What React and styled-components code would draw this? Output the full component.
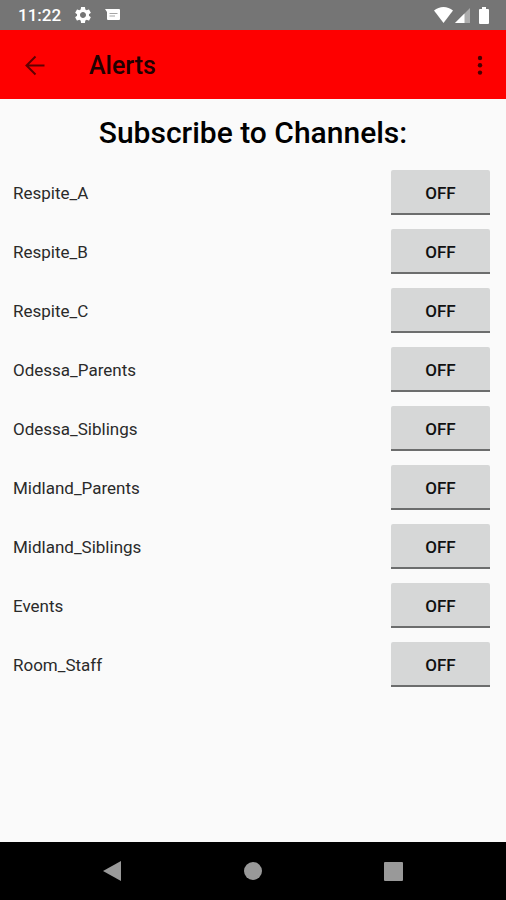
import React, { useState } from "react";
import styled, { createGlobalStyle } from "styled-components";

const Global = createGlobalStyle`
  *, *::before, *::after { box-sizing: border-box; }
  body { margin: 0; font-family: Roboto, "Noto Sans", sans-serif; background: #fafafa; color: #2a2a2a; }
  button { font: inherit; color: inherit; border: 0; padding: 0; background: none; cursor: pointer; }
`;

const Screen = styled.div`
  min-height: 100vh;
  display: flex;
  flex-direction: column;
`;

const StatusBar = styled.div`
  height: 30px;
  padding: 0 17px 0 18px;
  display: flex;
  align-items: center;
  justify-content: space-between;
  background: #757575;
  color: #fff;
`;

const StatusGroup = styled.div`
  display: flex;
  align-items: center;
  gap: 12px;
`;

const SystemIcons = styled(StatusGroup)`
  gap: 2px;

  svg:last-child { margin-left: 7px; }
`;

const Clock = styled.span`
  font-size: 17px;
  font-weight: 500;
  line-height: 32px;
`;

const AppBar = styled.header`
  height: 69px;
  padding: 2px 12px 0 21px;
  display: flex;
  align-items: center;
  background: #fe0000;
`;

const BarButton = styled.button`
  display: flex;
  align-items: center;
  justify-content: center;
  width: 28px;
  height: 44px;
`;

const BarTitle = styled.h1`
  flex: 1;
  margin: 0 0 0 40px;
  font-size: 25px;
  font-weight: 500;
  color: #200000;
`;

const Content = styled.main`
  flex: 1;
  padding: 15px 13px;
`;

const Heading = styled.h2`
  margin: 0 0 18px;
  font-size: 30px;
  line-height: 38px;
  font-weight: 500;
  text-align: center;
  color: #000;
`;

const ChannelList = styled.ul`
  margin: 0;
  padding: 0 3px 0 0;
  list-style: none;
  display: flex;
  flex-direction: column;
  gap: 14px;
`;

const Channel = styled.li`
  display: flex;
  align-items: center;
  justify-content: space-between;
  font-size: 17px;
`;

const Toggle = styled.button`
  && {
    width: 99px;
    height: 45px;
    padding-top: 2px;
    border-radius: 2px 2px 0 0;
    box-shadow: inset 0 -2px ${({ $on }) => ($on ? "#d81b60" : "#6c6d6d")};
    background: #d6d7d7;
    color: #111;
    font-size: 17px;
    font-weight: 500;
    line-height: 43px;
  }
`;

const NavBar = styled.nav`
  height: 58px;
  padding: 0 42px;
  display: flex;
  align-items: center;
  justify-content: space-around;
  background: #000;
`;

const NavButton = styled.button`
  && {
    width: 48px;
    height: 48px;
    display: flex;
    align-items: center;
    justify-content: center;
    color: #999;
  }
`;

const channels = [
  "Respite_A", "Respite_B", "Respite_C", "Odessa_Parents", "Odessa_Siblings",
  "Midland_Parents", "Midland_Siblings", "Events", "Room_Staff",
];

function ChannelRow({ name }) {
  const [on, setOn] = useState(false);
  const id = `channel-${name}`;
  return (
    <Channel>
      <label htmlFor={id}>{name}</label>
      <Toggle id={id} type="button" $on={on} aria-pressed={on} onClick={() => setOn(!on)}>
        {on ? "ON" : "OFF"}
      </Toggle>
    </Channel>
  );
}

const GearIcon = () => (
  <svg width="20" height="20" viewBox="0 0 24 24" fill="currentColor" aria-hidden="true">
    <path d="M19.14 12.94c.04-.3.06-.61.06-.94 0-.32-.02-.64-.07-.94l2.03-1.58c.18-.14.23-.41.12-.61l-1.92-3.32c-.12-.22-.37-.29-.59-.22l-2.39.96c-.5-.38-1.03-.7-1.62-.94l-.36-2.54c-.04-.24-.24-.41-.48-.41h-3.84c-.24 0-.43.17-.47.41l-.36 2.54c-.59.24-1.13.57-1.62.94l-2.39-.96c-.22-.08-.47 0-.59.22L2.74 8.87c-.12.21-.08.47.12.61l2.03 1.58c-.05.3-.09.63-.09.94s.02.64.07.94l-2.03 1.58c-.18.14-.23.41-.12.61l1.92 3.32c.12.22.37.29.59.22l2.39-.96c.5.38 1.03.7 1.62.94l.36 2.54c.05.24.24.41.48.41h3.84c.24 0 .44-.17.47-.41l.36-2.54c.59-.24 1.13-.56 1.62-.94l2.39.96c.22.08.47 0 .59-.22l1.92-3.32c.12-.22.07-.47-.12-.61l-2.01-1.58zM12 15.6c-1.98 0-3.6-1.62-3.6-3.6s1.62-3.6 3.6-3.6 3.6 1.62 3.6 3.6-1.62 3.6-3.6 3.6z" />
  </svg>
);

const MessageIcon = () => (
  <svg width="15" height="12" viewBox="0 0 15 12" aria-hidden="true">
    <path d="M0 0H14Q15 0 15 1V10Q15 11 14 11H3Q2 11 2 10V3Z" fill="currentColor" />
    <path d="M4.500 4.500H12.500M4.500 7H10" stroke="#a5a5a5" strokeWidth="1" />
  </svg>
);

const WifiIcon = () => (
  <svg width="19" height="16" viewBox="0 0 19 16" fill="currentColor" aria-hidden="true">
    <path d="M9.500 16L0 3.500Q4.200 0 9.500 0T19 3.500Z" />
  </svg>
);

const SignalIcon = () => (
  <svg width="15" height="16" viewBox="0 0 15 16" fill="currentColor" aria-hidden="true">
    <path d="M15 1V16H0Z" opacity=".4" />
    <path d="M9.500 6.500V16H0Z" />
  </svg>
);

const BatteryIcon = () => (
  <svg width="10" height="17" viewBox="0 0 10 17" fill="currentColor" aria-hidden="true">
    <path d="M3 0H7V2H9Q10 2 10 3V16Q10 17 9 17H1Q0 17 0 16V3Q0 2 1 2H3Z" />
  </svg>
);

const BackArrow = () => (
  <svg width="28" height="28" viewBox="0 0 28 28" fill="none" stroke="#600000" strokeWidth="2" aria-hidden="true">
    <path d="M23.500 13.500H6M14.500 4.500L5.500 13.500L14.500 22.500" />
  </svg>
);

const MoreIcon = () => (
  <svg width="28" height="28" viewBox="0 0 28 28" fill="#480000" aria-hidden="true">
    <circle cx="14" cy="6" r="2.200" /><circle cx="14" cy="13.300" r="2.200" /><circle cx="14" cy="20.600" r="2.200" />
  </svg>
);

export default function App() {
  return (
    <Screen>
      <Global />
      <StatusBar>
        <StatusGroup><Clock>11:22</Clock><GearIcon /><MessageIcon /></StatusGroup>
        <SystemIcons><WifiIcon /><SignalIcon /><BatteryIcon /></SystemIcons>
      </StatusBar>
      <AppBar>
        <BarButton type="button" aria-label="Back"><BackArrow /></BarButton>
        <BarTitle>Alerts</BarTitle>
        <BarButton type="button" aria-label="More options"><MoreIcon /></BarButton>
      </AppBar>
      <Content>
        <Heading>Subscribe to Channels:</Heading>
        <ChannelList>
          {channels.map((name) => <ChannelRow key={name} name={name} />)}
        </ChannelList>
      </Content>
      <NavBar>
        <NavButton type="button" aria-label="Back">
          <svg width="18" height="20" viewBox="0 0 18 20" fill="currentColor" aria-hidden="true"><path d="M18 0V20L0 10Z" /></svg>
        </NavButton>
        <NavButton type="button" aria-label="Home">
          <svg width="18" height="18" viewBox="0 0 18 18" fill="currentColor" aria-hidden="true"><circle cx="9" cy="9" r="9" /></svg>
        </NavButton>
        <NavButton type="button" aria-label="Recent apps">
          <svg width="19" height="19" viewBox="0 0 19 19" fill="currentColor" aria-hidden="true"><rect width="19" height="19" rx="1" /></svg>
        </NavButton>
      </NavBar>
    </Screen>
  );
}
